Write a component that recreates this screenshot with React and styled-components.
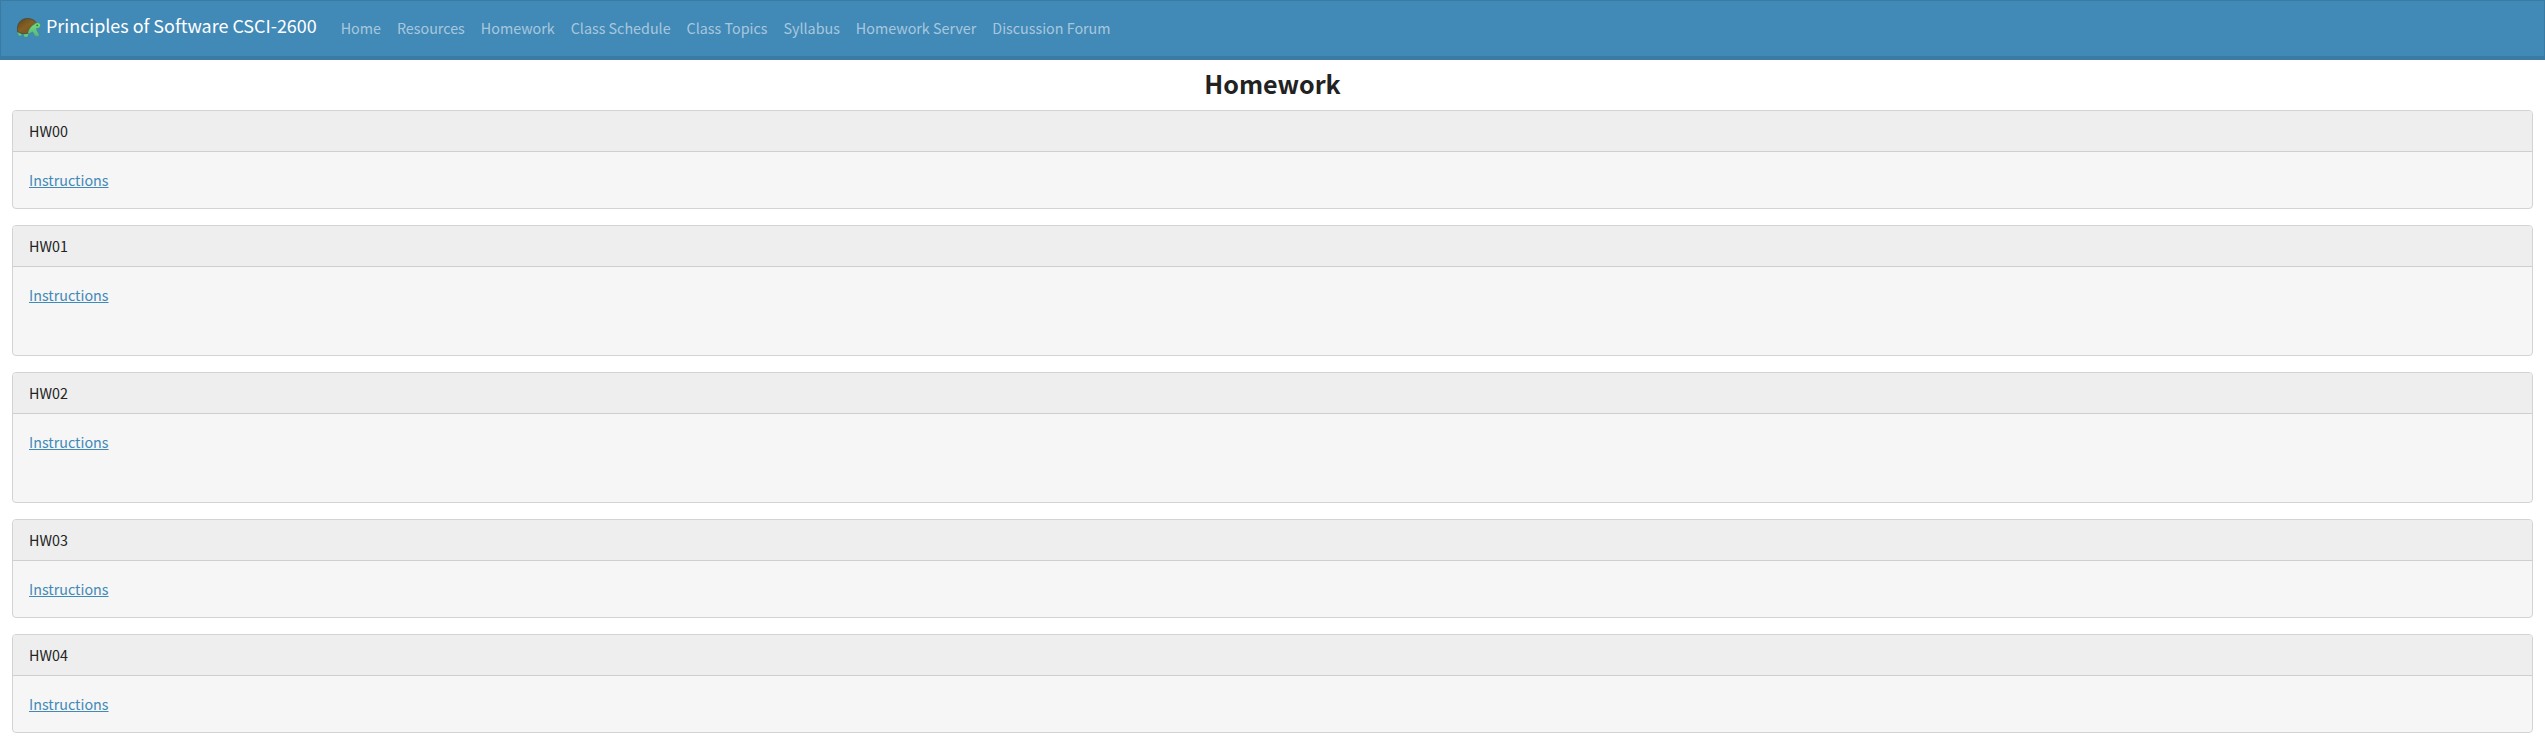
import React from 'react';
import styled, { createGlobalStyle } from 'styled-components';

const GlobalStyle = createGlobalStyle`
  *, *::before, *::after { box-sizing: border-box; }
  body {
    margin: 0;
    background: #fff;
    color: #222;
    font-family: "Noto Sans CJK JP", "Noto Sans", sans-serif;
    font-size: 14.32px;
    line-height: 24px;
  }
`;

const Navbar = styled.nav`
  display: flex;
  align-items: flex-start;
  height: 60px;
  padding: 7px 16px 0;
  background: #4189b7;
  border: 1px solid #397ba3;
  border-bottom-width: 4px;
`;

const Brand = styled.a`
  display: flex;
  align-items: center;
  height: 30px;
  margin: 2px 16px 0 0;
  color: #fff;
  font-size: 17.91px;
  line-height: 30px;
  white-space: nowrap;
  text-decoration: none;
`;

const TurtleIcon = styled.svg`
  width: 24px;
  height: 20px;
  margin: 5px 5px 0 0;
`;

const NavList = styled.ul`
  display: flex;
  margin: 0;
  padding: 0;
  list-style: none;
`;

const NavLink = styled.a`
  display: block;
  padding: 8px;
  color: rgba(255, 255, 255, 0.55);
  white-space: nowrap;
  text-decoration: none;
`;

const Main = styled.main`
  padding: 0 12px;
`;

const Title = styled.h1`
  margin: 0;
  padding: 6px 0 10px;
  height: 50px;
  font-size: 25.07px;
  font-weight: 700;
  line-height: 34px;
  text-align: center;
`;

const CardList = styled.div`
  display: flex;
  flex-direction: column;
  gap: 16px;
`;

const Card = styled.section`
  background: #f6f6f6;
  border: 1px solid #d3d3d3;
  border-radius: 4px;
  overflow: hidden;
`;

const CardHeader = styled.header`
  padding: 8px 16px;
  background: #eee;
  border-bottom: 1px solid #cfcfcf;
`;

const CardBody = styled.div`
  padding: 16px 16px ${(p) => (p.$tall ? 48 : 16)}px;
`;

const CardLink = styled.a`
  display: block;
  width: fit-content;
  color: #4189b7;
  text-decoration: underline;
`;

const navItems = [
  'Home',
  'Resources',
  'Homework',
  'Class Schedule',
  'Class Topics',
  'Syllabus',
  'Homework Server',
  'Discussion Forum',
];

const homework = [
  { name: 'HW00' },
  { name: 'HW01', tall: true },
  { name: 'HW02', tall: true },
  { name: 'HW03' },
  { name: 'HW04' },
];

function Turtle() {
  return (
    <TurtleIcon viewBox="0 0 24 20" aria-hidden="true">
      <defs>
        <linearGradient id="shell" x1="0" y1="0" x2="0.9" y2="1">
          <stop offset="0" stopColor="#5a4520" />
          <stop offset="0.5" stopColor="#866024" />
          <stop offset="1" stopColor="#6b5222" />
        </linearGradient>
        <linearGradient id="skin" x1="0" y1="0" x2="0" y2="1">
          <stop offset="0" stopColor="#76dc7c" />
          <stop offset="1" stopColor="#55b587" />
        </linearGradient>
      </defs>
      <path d="M.8 13.2 Q-.2 17 2.8 18.2 L4.8 17.5 L4.5 14Z M6 15 L7.2 19.3 H10.8 L12 15Z" fill="#62c78c" stroke="#367858" strokeWidth=".4" />
      <path d="M.5 13.5 C-.5 5.5 4 .5 10.2 .5 C15 .5 18 2.5 19.6 5 C17 8 12.5 10.8 11.2 15.2 C7.5 16.2 3 15.7 .5 13.5Z" fill="url(#shell)" stroke="#49402c" strokeWidth=".7" />
      <path d="M10.8 15.5 C12 10.5 14.2 8 17.2 6.5 C18.2 5 21 4.2 22.6 5.4 C24.2 6.8 23.5 9.2 21.8 10 C20.8 10.5 20 10.5 19.3 10.4 C19.5 12.8 22 14.8 22.3 17.2 C22 18.8 19 18.8 17.8 17.8 L15.7 13.8 C13.6 14.7 12.8 16 10.8 15.5Z" fill="url(#skin)" stroke="#39895b" strokeWidth=".4" />
      <circle cx="20.2" cy="7.3" r=".9" fill="#376b28" />
    </TurtleIcon>
  );
}

export default function App() {
  return (
    <>
      <GlobalStyle />
      <Navbar>
        <Brand>
          <Turtle />
          Principles of Software CSCI-2600
        </Brand>
        <NavList>
          {navItems.map((item) => (
            <li key={item}>
              <NavLink>{item}</NavLink>
            </li>
          ))}
        </NavList>
      </Navbar>
      <Main>
        <Title>Homework</Title>
        <CardList>
          {homework.map(({ name, tall }) => (
            <Card key={name}>
              <CardHeader>{name}</CardHeader>
              <CardBody $tall={tall}>
                <CardLink>Instructions</CardLink>
              </CardBody>
            </Card>
          ))}
        </CardList>
      </Main>
    </>
  );
}
